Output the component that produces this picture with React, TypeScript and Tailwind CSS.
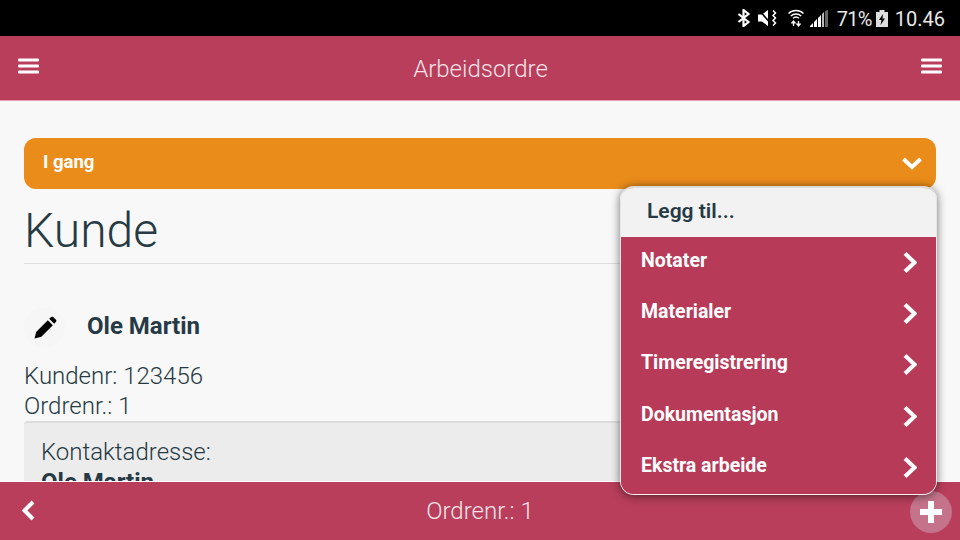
const menuItems = ["Notater", "Materialer", "Timeregistrering", "Dokumentasjon", "Ekstra arbeide"];

function Hamburger() {
  return (
    <svg width="22" height="16" viewBox="0 0 22 16" fill="white">
      <rect x="0" y="0.5" width="21" height="3" rx="1" />
      <rect x="0" y="6.5" width="21" height="3" rx="1" />
      <rect x="0" y="12.5" width="21" height="3" rx="1" />
    </svg>
  );
}

function Chevron({ d, w, h }: { d: string; w: number; h: number }) {
  return (
    <svg width={w} height={h} viewBox={`0 0 ${w} ${h}`} fill="none" stroke="white" strokeWidth="4">
      <path d={d} />
    </svg>
  );
}

function StatusBar() {
  return (
    <div className="h-9 shrink-0 bg-black flex items-center justify-end pr-[15px] text-[#e8e8e8] leading-none">
      {/* bluetooth */}
      <svg width="14" height="18" viewBox="0 0 14 18" fill="none" stroke="white" strokeWidth="2.200">
        <path d="M1.500 5l10 8-5 4V1l5 4-10 8" />
      </svg>
      {/* muted with vibrate */}
      <svg width="20" height="18" viewBox="0 0 20 18" fill="white" className="ml-[7px]">
        <path d="M0 5.500h4L10 1v16l-6-4.500H0z" />
        <path d="M0.500 0.500l14 16" stroke="black" strokeWidth="1.500" />
        <path d="M15 1.500l2.500 2.500-2.500 2.500 2.500 2.500-2.500 2.500 2.500 2.500-2.500 2.500" fill="none" stroke="white" strokeWidth="1.500" />
      </svg>
      {/* wifi */}
      <svg width="16" height="18" viewBox="0 0 16 18" fill="none" stroke="white" strokeWidth="1.300" className="ml-[10px]">
        <path d="M0.500 4.500C4.500 0.500 11.500 0.500 15.500 4.500" />
        <path d="M2.800 7C5.500 4.300 10.500 4.300 13.200 7" />
        <path d="M5 9.300C6.700 7.800 9.300 7.800 11 9.300" />
        <path d="M5.500 12v5M3.500 14.500l2-2.500 2 2.500M10.500 17v-5M8.500 14.500l2 2.500 2-2.500" />
      </svg>
      {/* signal */}
      <svg width="18" height="17" viewBox="0 0 18 17" className="ml-[6px]">
        <path d="M0 16l3-3v4H0zM4 12l3-3v8H4zM8 8l3-3v12H8z" fill="white" />
        <path d="M12 4l2-2v15h-2z" fill="#bbb" />
        <path d="M15 1l3-1v17h-3z" fill="#666" />
      </svg>
      <span className="font-normal text-[20px] ml-[9px] tracking-[-0.7px] pt-px">71%</span>
      {/* battery */}
      <svg width="12" height="17" viewBox="0 0 12 17" className="ml-[4px]">
        <path d="M3.500 0h5v2H12v15H0V2h3.500z" fill="#ddd" />
        <path d="M7 4L3 10h2.500L4.500 15 9 8.500H6.500z" fill="black" />
      </svg>
      <span className="font-normal text-[20px] ml-[7px] pt-px">10.46</span>
    </div>
  );
}

export default function App() {
  return (
    <div className="relative w-[960px] h-[540px] flex flex-col overflow-hidden bg-[#f8f8f8] font-[Roboto,sans-serif] text-[#263a45]">
      <StatusBar />

      <header className="h-[65px] shrink-0 bg-[#b83e5b] border-b border-[#e29cb0] flex items-center justify-between pl-[18px] pr-[17px] pb-[5px]">
        <Hamburger />
        <h1 className="text-[24px] font-light text-[#f5e3e7] pt-[7px]">Arbeidsordre</h1>
        <Hamburger />
      </header>

      <main className="flex-1 min-h-0 overflow-hidden px-6 pt-[37px]">
        <div className="h-[51px] rounded-xl bg-[#ea8c1a] flex items-center justify-between pl-[19px] pr-[14px]">
          <span className="text-white text-[18.5px] font-bold pb-[2px]">I gang</span>
          <Chevron d="M1.500 2l8.500 8 8.500-8" w={20} h={13} />
        </div>

        <h2 className="text-[48px] font-light leading-[54px] mt-[15px] pb-[5px] border-b border-[#dedede]">Kunde</h2>

        <div className="flex items-center mt-[43px] gap-[22px]">
          <div className="w-[41px] h-[41px] rounded-full bg-[#f6f6f6] flex items-center justify-center">
            <svg width="24" height="24" viewBox="0 0 24 24" fill="black">
              <path d="M1.500 22.500l1.800-6.800L14.800 4.200l5 5L8.300 20.700z" />
              <path d="M16.200 2.800l2-1.800c.6-.5 1.400-.5 2 0l2.800 2.800c.5.600.5 1.400 0 2l-1.800 2z" />
            </svg>
          </div>
          <span className="text-[24px] font-bold leading-7 pb-[3px]">Ole Martin</span>
        </div>

        <div className="text-[24px] font-light leading-[30px] mt-[13px]">
          <div>Kundenr: 123456</div>
          <div>Ordrenr.: 1</div>
        </div>

        <div className="mt-0 rounded bg-[#ececec] border-t-2 border-[#dcdcdc] pl-[17px] pt-[14px] text-[24px] leading-[30px]">
          <div className="font-light">Kontaktadresse:</div>
          <div className="font-bold">Ole Martin</div>
        </div>
      </main>

      <footer className="h-[59px] shrink-0 bg-[#b83e5b] border-t border-white flex items-center justify-between pl-[20px] pr-[8px] relative">
        <Chevron d="M13 2L4.500 10.500 13 19" w={15} h={22} />
        <span className="absolute left-0 right-0 text-center text-[24px] font-light text-[#f5e3e7]">Ordrenr.: 1</span>
        <div className="w-[42px] h-[42px] rounded-full bg-[#c4738a] flex items-center justify-center mt-[1px]">
          <svg width="22" height="22" viewBox="0 0 22 22" fill="white">
            <path d="M8 0h6v8h8v6h-8v8H8v-8H0V8h8z" />
          </svg>
        </div>
      </footer>

      {/* add menu popup */}
      <div className="absolute left-[620px] top-[186px] w-[317px] rounded-[14px] border border-t-2 border-[#e6e6e6] border-t-[#dcdcdc] border-b-[#f4f0f0] overflow-hidden shadow-[0_1px_10px_rgba(0,0,0,0.55)]">
        <div className="h-[49px] bg-[#f2f2f2] pl-[26px] flex items-center text-[21px] font-semibold pb-[2px]">Legg til...</div>
        <ul className="bg-[#b73b59]">
          {menuItems.map((item) => (
            <li key={item} className="h-[51.4px] flex items-center justify-between pl-[20px] pr-[19px] text-white text-[19.5px] font-bold">
              <span className="pb-[5px]">{item}</span>
              <span className="flex pb-[1px]">
                <Chevron d="M2 1.500l9.500 9-9.500 9" w={14} h={21} />
              </span>
            </li>
          ))}
        </ul>
      </div>
    </div>
  );
}
